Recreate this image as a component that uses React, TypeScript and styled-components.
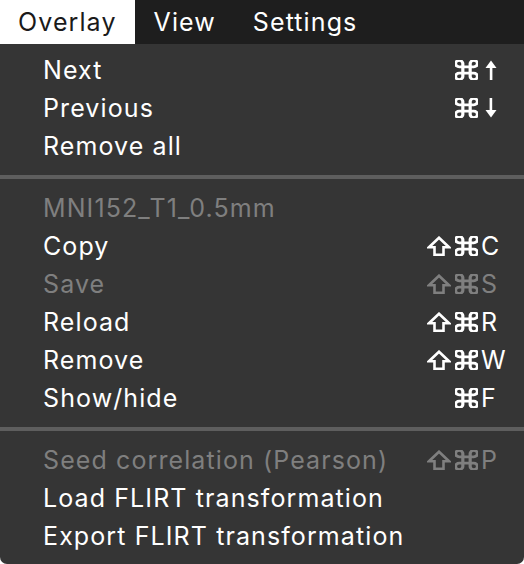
import React from "react";
import styled, { createGlobalStyle } from "styled-components";

const Global = createGlobalStyle`
  html, body { margin: 0; padding: 0; background: #353535; }
  body { font-family: Inter, "Noto Sans", sans-serif; -webkit-font-smoothing: antialiased; }
`;

const Frame = styled.div`
  width: 524px;
  height: 564px;
  background: #ffffff;
  display: flex;
  flex-direction: column;
  overflow: hidden;
`;

const MenuBar = styled.div`
  height: 44px;
  background: #1e1e1e;
  display: flex;
  gap: 1px;
  flex-shrink: 0;
`;

const BarItem = styled.div<{ $active?: boolean }>`
  padding: 0 18px;
  line-height: 44px;
  font-size: 25px;
  letter-spacing: 1.1px;
  color: ${(p) => (p.$active ? "#1a1a1a" : "#ffffff")};
  background: ${(p) => (p.$active ? "#ffffff" : "transparent")};
`;

const Panel = styled.div`
  flex: 1;
  background: #353535;
  border-radius: 0 0 7px 7px;
  padding: 6px 0 10px;
  display: flex;
  flex-direction: column;
`;

const Row = styled.div<{ $disabled?: boolean }>`
  display: grid;
  grid-template-columns: 1fr auto 26px;
  column-gap: 3px;
  align-items: center;
  padding: 0 17px 0 43px;
  height: 38px;
  line-height: 38px;
  font-size: 25px;
  letter-spacing: 1.1px;
  color: ${(p) => (p.$disabled ? "#7f7f7f" : "#ffffff")};
  white-space: nowrap;
`;

const Mods = styled.span`
  display: flex;
  justify-content: flex-end;
  align-items: center;
  gap: 4px;
  height: 38px;
  padding-top: 1px;
`;

const Key = styled.span<{ $symbol?: boolean }>`
  display: flex;
  align-items: center;
  height: 38px;
  padding-left: ${(p) => (p.$symbol ? "3px" : "0")};
  padding-top: ${(p) => (p.$symbol ? "1px" : "0")};
`;

const Separator = styled.div<{ $top: number; $bottom: number }>`
  height: 4px;
  background: #5e5e5e;
  margin: ${(p) => `${p.$top}px 0 ${p.$bottom}px`};
`;

const ShiftIcon = () => (
  <svg width="24" height="20" viewBox="0 0 24 20" fill="none" stroke="currentColor" strokeWidth="2.6" strokeLinejoin="miter">
    <path d="M12 1.7 L22 11.2 H16.5 V18.7 H7.5 V11.2 H2 Z" />
  </svg>
);

const CmdIcon = () => (
  <svg width="23" height="20" viewBox="2.6 2.6 18.8 18.8" preserveAspectRatio="none" fill="none" stroke="currentColor" strokeWidth="2.6">
    <path d="M15 6v12a3 3 0 1 0 3-3H6a3 3 0 1 0 3 3V6a3 3 0 1 0-3 3h12a3 3 0 1 0-3-3" />
  </svg>
);

const ArrowIcon = ({ down }: { down?: boolean }) => (
  <svg width="14" height="20" viewBox="0 0 14 20" fill="currentColor" stroke="none">
    <g transform={down ? "rotate(180 7 10)" : undefined}>
      <rect x="5.8" y="6" width="2.6" height="14" />
      <polygon points="1.5,8 7,0.5 12.5,8" />
    </g>
  </svg>
);

type Item = {
  label: string;
  shift?: boolean;
  cmd?: boolean;
  key?: string;
  arrow?: "up" | "down";
  disabled?: boolean;
};

const sections: Item[][] = [
  [
    { label: "Next", cmd: true, arrow: "up" },
    { label: "Previous", cmd: true, arrow: "down" },
    { label: "Remove all" },
  ],
  [
    { label: "MNI152_T1_0.5mm", disabled: true },
    { label: "Copy", shift: true, cmd: true, key: "C" },
    { label: "Save", shift: true, cmd: true, key: "S", disabled: true },
    { label: "Reload", shift: true, cmd: true, key: "R" },
    { label: "Remove", shift: true, cmd: true, key: "W" },
    { label: "Show/hide", cmd: true, key: "F" },
  ],
  [
    { label: "Seed correlation (Pearson)", shift: true, cmd: true, key: "P", disabled: true },
    { label: "Load FLIRT transformation" },
    { label: "Export FLIRT transformation" },
  ],
];

export default function App() {
  return (
    <Frame>
      <Global />
      <MenuBar>
        <BarItem $active>Overlay</BarItem>
        <BarItem>View</BarItem>
        <BarItem>Settings</BarItem>
      </MenuBar>
      <Panel>
        {sections.map((sec, i) => (
          <React.Fragment key={i}>
            {i > 0 && <Separator $top={11} $bottom={9} />}
            {sec.map((it) => (
              <Row key={it.label} $disabled={it.disabled}>
                <span>{it.label}</span>
                <Mods>
                  {it.shift && <ShiftIcon />}
                  {it.cmd && <CmdIcon />}
                </Mods>
                <Key $symbol={!!it.arrow}>
                  {it.arrow ? <ArrowIcon down={it.arrow === "down"} /> : it.key ?? ""}
                </Key>
              </Row>
            ))}
          </React.Fragment>
        ))}
      </Panel>
    </Frame>
  );
}
